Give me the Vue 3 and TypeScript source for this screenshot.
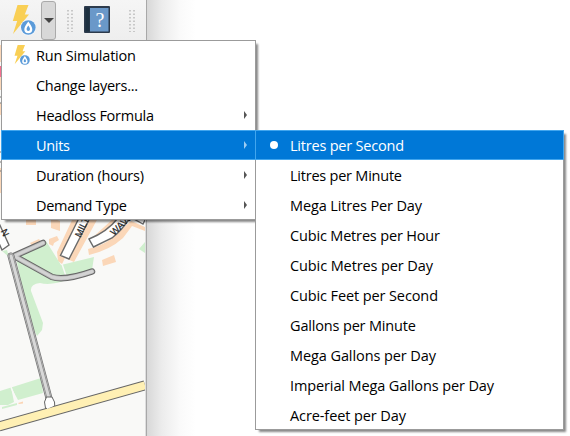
<script setup lang="ts">
interface Entry { label: string; w: number; arrow?: boolean; active?: boolean; icon?: boolean; dot?: boolean }

const mainMenu: Entry[] = [
  { label: 'Run Simulation', w: 100, icon: true },
  { label: 'Change layers...', w: 102 },
  { label: 'Headloss Formula', w: 118, arrow: true },
  { label: 'Units', w: 34, arrow: true, active: true },
  { label: 'Duration (hours)', w: 108, arrow: true },
  { label: 'Demand Type', w: 91, arrow: true },
]
const units: Entry[] = [
  { label: 'Litres per Second', w: 114, active: true, dot: true },
  { label: 'Litres per Minute', w: 112 },
  { label: 'Mega Litres Per Day', w: 132 },
  { label: 'Cubic Metres per Hour', w: 150 },
  { label: 'Cubic Metres per Day', w: 143 },
  { label: 'Cubic Feet per Second', w: 148 },
  { label: 'Gallons per Minute', w: 126 },
  { label: 'Mega Gallons per Day', w: 146 },
  { label: 'Imperial Mega Gallons per Day', w: 204 },
  { label: 'Acre-feet per Day', w: 116 },
]
</script>

<template>
  <main class="screen">
    <svg width="0" height="0" class="defs">
      <symbol id="bolt" viewBox="0 0 24 32">
        <path d="M5.5 1H16.5L12.8 10.5H17L1 30 5.2 17H.8Z" fill="#f9cf55" />
        <circle cx="16.3" cy="23.5" r="8" fill="#f4f7fb" />
        <circle cx="16.3" cy="23.5" r="7.3" fill="#5b9bd9" />
        <path d="M16.3 17.4C18.5 20.8 20.3 23 20.3 25.200a4 4 0 0 1-8 0C12.300 23 14.100 20.800 16.300 17.400Z" fill="#fff" />
        <path d="M16.300 21.500C17.600 23.400 18 24.200 18 25.200a1.700 1.700 0 0 1-3.400 0C14.600 24.200 15 23.400 16.300 21.500Z" fill="#5b9bd9" />
      </symbol>
    </svg>
    <section class="window">
      <header class="toolbar">
        <svg class="run" width="24" height="32"><use href="#bolt" /></svg>
        <span class="drop"><i /></span>
        <svg class="grip" width="6" height="22"><path d="M1 0V22M5 0V22" /></svg>
        <svg class="book" width="26" height="27" viewBox="0 0 26 27">
          <rect width="26" height="27" rx="1" fill="#2d3b4c" />
          <rect x="6" y="2" width="18.500" height="23.500" fill="#6a98c9" />
          <rect x="1.500" y="1.500" width="4" height="24" fill="#1d3040" />
          <text x="16" y="20.500" text-anchor="middle">?</text>
        </svg>
        <svg class="grip last" width="6" height="22"><path d="M1 0V22M5 0V22" /></svg>
      </header>
      <svg class="map" width="145" height="396" viewBox="0 40 145 396">
        <rect y="40" width="145" height="396" fill="#f9f9f7" />
        <g fill="#fbd7b8">
          <path d="M0 45H3V62H0ZM0 76H3V90H0ZM0 103H3V115H0ZM0 168H3V193H0Z" />
          <path d="M26 218H36V225H26ZM51 218L60 221V231L51 228ZM30 243L39 239 42 243 33 247ZM49 239L57 236 59 240 54 243 53 246 49 244ZM102 260L114 255 116 262 103 266Z" />
          <path d="M57 252L73 218H98L74 262 65 258 62 264 58 261ZM88 249Q108 245 122 229L131 221 145 227V231L132 226 123 238Q110 250 89 255ZM92 238L114 218H121L108 231Z" />
        </g>
        <rect y="66" width="3" height="11" fill="#f46f8f" />
        <path d="M0 97H3M0 103H3M0 152H3M0 162H3M0 171H3" stroke="#777" />
        <path d="M16 257L46 241 61 265 94 257 92 270 69 279Q52 286 40 283 30 284 31 291L43 323 42 330 37 336 33 328 28 318ZM145 242L139 249 145 253ZM2 251L7 250 9 257ZM0 391L41 378 43 393 18 400 11 387 14 402 8 405 0 405ZM2 407L17 403 17 405 2 409Z" fill="#d0efce" />
        <path d="M11 387L16 400M62 264L66 276" stroke="#f9f9f7" stroke-width="1.500" />
        <path d="M18 403L23 401.500 23 403.500 19 404Z" fill="#fbd5b5" />
        <g fill="#fff" stroke="#6a6a6a" stroke-width="1.400">
          <path d="M-2 221L9 245 2 250-2 241ZM79 218L60.500 255.500 69 259 90 218ZM118 218Q107 232 89 239L93.500 247 112 238Q122 230 130 218ZM132 218L143 224 146 218" />
        </g>
        <g class="roads">
          <path d="M43 243L14 256 52 277Q65 281 92 271.500" stroke="#666" stroke-width="6.500" />
          <path d="M43 243L14 256 52 277Q65 281 92 271.500" stroke="#b5b5b5" stroke-width="4.500" />
          <path d="M43 243L14 256 52 277Q65 281 92 271.500" stroke="#d3d3d3" stroke-width="3" />
          <path d="M11 256L50 402" stroke="#777" stroke-width="7" />
          <path d="M11 256L50 402" stroke="#c2c2c2" stroke-width="5.500" />
          <path d="M11 256L50 402" stroke="#8a8a8a" stroke-width="4.500" />
          <path d="M11 256L50 402" stroke="#d8d8d8" stroke-width="3" />
        </g>
        <path d="M46.500 397L44.500 402 46 411H55L54.500 402 52 397Z" fill="#fff" stroke="#666" />
        <path d="M-1 426.500L145 385.300" stroke="#666" stroke-width="10" />
        <path d="M-1 426.500L145 385.300" stroke="#fff0b4" stroke-width="8" />
        <path d="M47 403H53.500V406L47 409Z" fill="#fff" />
        <g class="street">
          <text transform="translate(80.500 238) rotate(-65)">MILTON</text>
          <text transform="translate(114 236) rotate(-44)">WAVE</text>
          <text transform="translate(.5 231) rotate(64)" font-size="8">N</text>
        </g>
      </svg>
    </section>

    <nav class="menu primary">
      <div v-for="item in mainMenu" :key="item.label" class="row" :class="{ active: item.active }">
        <svg v-if="item.icon" class="mini" width="16" height="22"><use href="#bolt" /></svg>
        <svg class="label" :width="item.w + 4" height="30"><text x="0" y="20.500" :textLength="item.w">{{ item.label }}</text></svg>
        <i v-if="item.arrow" class="arrow" />
      </div>
    </nav>
    <nav class="menu sub">
      <div v-for="item in units" :key="item.label" class="row" :class="{ active: item.active }">
        <i v-if="item.dot" class="dot" />
        <svg class="label" :width="item.w + 4" height="30"><text x="0" y="20.500" :textLength="item.w">{{ item.label }}</text></svg>
      </div>
    </nav>
  </main>
</template>

<style>
body { background: #fff; }
</style>
<style scoped>
.screen { position: relative; width: 570px; height: 436px; overflow: hidden; background: linear-gradient(90deg, #d8d8d8 147px, #ececec 162px, #fafafa 180px, #fff 196px); font-family: "Open Sans", "Noto Sans", sans-serif; }
.defs { position: absolute; }
.window { width: 147px; height: 436px; box-sizing: border-box; background: #dedede; border-right: 1px solid #a8a8a8; }
.toolbar { display: flex; height: 40px; background: linear-gradient(#f5f5f5, #eee); box-sizing: border-box; }
.run { margin: 4px 0 0 12px; }
.drop { width: 15px; height: 39px; box-sizing: border-box; margin: 1px 0 0 5px; border: 1px solid #aaa; border-radius: 3px; background: #d8d8d8; display: flex; align-items: center; justify-content: center; }
.drop i { border: 5px solid transparent; border-top-color: #444; border-bottom: 0; }
.grip { margin: 10px 0 0 11px; }
.grip path { stroke: #bbb; stroke-width: 1.5; stroke-dasharray: 1.500 2; }
.book { margin: 6px 0 0 11px; }
.book text { font: 20px "Liberation Serif", serif; fill: #fff; }
.grip.last { margin-left: 19px; }
.map { display: block; }
.roads { fill: none; stroke-linecap: round; stroke-linejoin: round; }
.street text { font-family: "Liberation Sans", sans-serif; font-size: 9.5px; fill: #222; stroke: #222; stroke-width: .2px; }
.menu { position: absolute; background: #fff; box-shadow: inset 0 0 0 1px #9b9b9b, 3px 3px 2px -1px #0007; }
.primary { left: 1px; top: 40px; width: 255px; height: 180px; }
.sub { left: 255px; top: 130px; width: 309px; height: 300px; }
.row { height: 30px; display: flex; align-items: center; padding-left: 35px; position: relative; box-sizing: border-box; color: #000; }
.row.active { background: #0078d7; box-shadow: inset 0 0 0 1px #42a6ee; color: #fff; }
.label { display: block; overflow: visible; }
.label text { font-size: 14.5px; fill: currentColor; }
.mini { position: absolute; left: 13px; top: 4px; }
.arrow { margin-left: auto; margin-right: 9px; border: 4px solid transparent; border-left: 3.500px solid #555; border-right: 0; }
.active .arrow { border-left-color: #9dccf2; }
.dot { position: absolute; left: 15px; top: 11px; width: 8px; height: 8px; border-radius: 50%; background: #fff; }
</style>
